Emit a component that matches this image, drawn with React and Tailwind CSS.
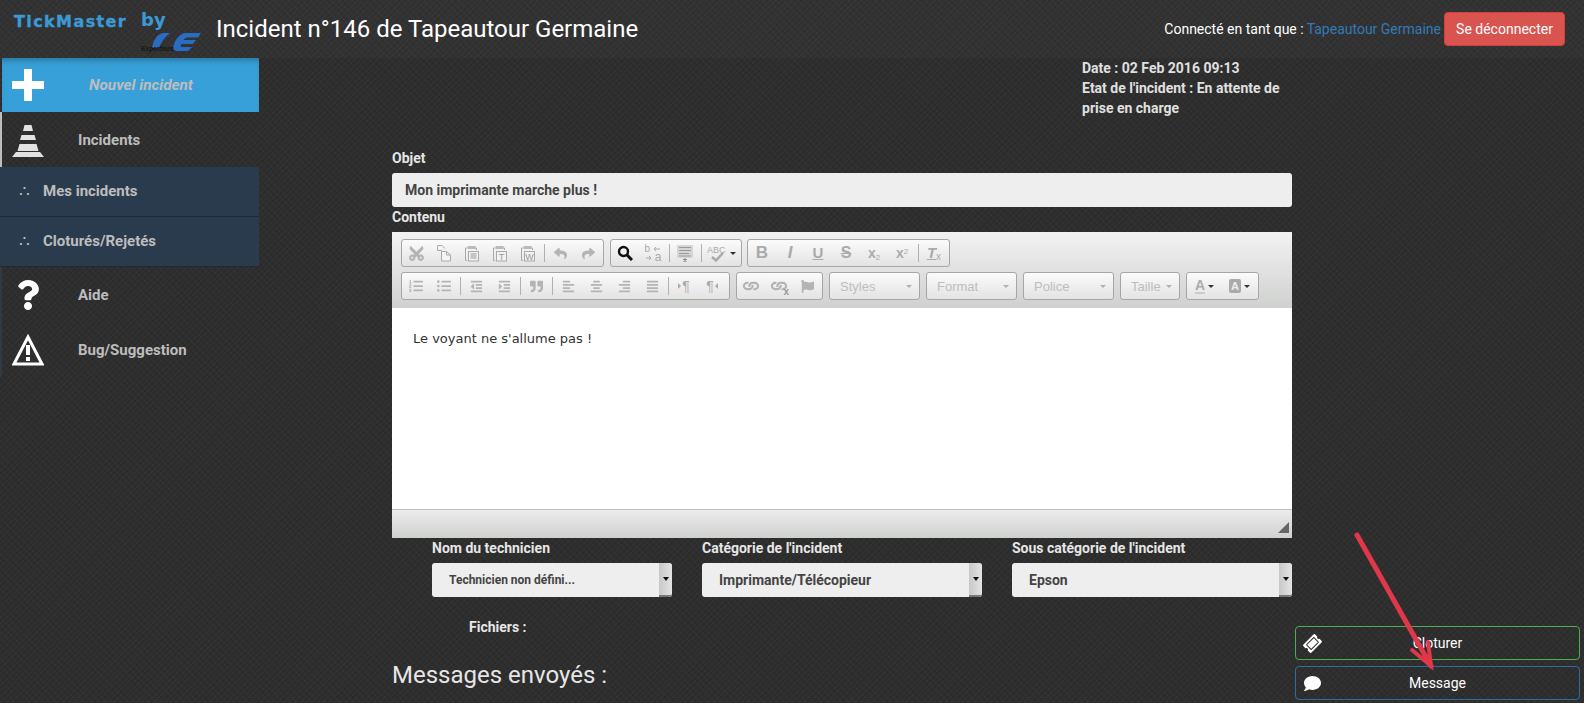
import React from 'react'
import {
  FaCut, FaReply, FaShare, FaListOl, FaListUl, FaOutdent, FaIndent, FaQuoteRight,
  FaAlignLeft, FaAlignCenter, FaAlignRight, FaAlignJustify, FaLink, FaFlag, FaQuestion,
  FaTicketAlt, FaComment,
} from 'react-icons/fa'

const Sep = () => <span className="mx-[1.5px] h-[18px] w-px bg-[#b0b0b0]" />

const Btn = ({ children, w = 'w-7' }) => (
  <span className={`flex h-full ${w} shrink-0 items-center justify-center text-[#b4b4b4]`}>{children}</span>
)

const Group = ({ children, className = 'pr-px' }) => (
  <div className={`flex h-7 items-center rounded-[3px] border border-[#a6a6a6] bg-gradient-to-b from-[#fbfbfb] to-[#e3e3e3] ${className}`}>
    {children}
  </div>
)

const Combo = ({ label, w }) => (
  <div className={`flex h-7 ${w} items-center justify-between rounded-[3px] border border-[#a6a6a6] bg-gradient-to-b from-[#fbfbfb] to-[#e3e3e3] pt-px pr-[7px] pl-[10px] font-['Liberation_Sans',sans-serif] text-[13px] text-[#bdbdbd]`}>
    {label}
    <span className="h-0 w-0 border-x-[3.5px] border-t-[3.5px] border-x-transparent border-t-[#b0b0b0]" />
  </div>
)

const Caret = ({ color = 'border-t-[#333]' }) => (
  <span className={`ml-[3px] h-0 w-0 border-x-[3px] border-t-[3px] border-x-transparent ${color}`} />
)

const PasteIcon = ({ letter }) => (
  <svg width="16" height="17" viewBox="0 0 16 17" fill="none" stroke="#aaa" strokeWidth="1">
    <path d="M3 3H1.5V15.5H3" />
    <rect x="3.5" y="1" width="8" height="3" fill="#bbb" stroke="none" />
    <path d="M11 3H12.5V5" />
    <rect x="4.5" y="6.5" width="10" height="9.5" fill="#f2f2f2" />
    {letter ? (
      <text x="9.5" y="14.5" fontSize="9" fontFamily="Liberation Sans, sans-serif" fill="#999" stroke="none" textAnchor="middle">{letter}</text>
    ) : (
      <path d="M6.5 9H12.5M6.5 11H12.5M6.5 13H12.5" stroke="#999" />
    )}
  </svg>
)

const CopyIcon = () => (
  <svg width="16" height="17" viewBox="0 0 16 17" fill="none" stroke="#aaa">
    <path d="M6 5.5H1.5V0.5H6L9 3.5" />
    <path d="M5.5 6.5H10.5L14.5 10V16H5.5Z" fill="#f4f4f4" />
    <path d="M10.5 6.5V10H14.5" />
  </svg>
)

const SearchIcon = () => (
  <svg width="16" height="16" viewBox="0 0 16 16" fill="none" stroke="#111">
    <circle cx="6.5" cy="6.5" r="4.5" strokeWidth="2.4" />
    <path d="M10 10L15 15" strokeWidth="3" />
  </svg>
)

const ReplaceIcon = () => (
  <span className="relative h-[17px] w-[17px] font-['Liberation_Sans',sans-serif] text-[#aaa]">
    <span className="absolute left-0 top-[-3px] text-[10px] leading-[14px]">b</span>
    <span className="absolute bottom-[-2px] right-0 text-[12px] leading-[14px]">a</span>
    <svg className="absolute inset-0" width="17" height="17" viewBox="0 0 17 17" fill="none" stroke="#aaa">
      <path d="M9 4H15M9 4L11 2M9 4L11 6" />
      <path d="M1 13H6M6 13L4 11M6 13L4 15" />
    </svg>
  </span>
)

const SelectAllIcon = () => (
  <svg width="16" height="17" viewBox="0 0 16 17">
    <rect x="0" y="0" width="16" height="13" fill="#d6d6d6" />
    <path d="M2 2.5H14M2 5.5H14M2 8.5H12M2 11H14" stroke="#999" />
    <path d="M6 14.5H10M8 13V17M6 17H10" stroke="#888" fill="none" />
  </svg>
)

const SpellIcon = () => (
  <span className="relative h-[17px] w-[20px] font-['Liberation_Sans',sans-serif] text-[9px] leading-[10px] text-[#aaa]">
    ABC
    <svg className="absolute bottom-0 left-[4px]" width="13" height="10" viewBox="0 0 13 10" fill="none" stroke="#a8a8a8" strokeWidth="2.4">
      <path d="M1 5L5 8.5L12 1" />
    </svg>
  </span>
)

const UnlinkIcon = () => (
  <span className="relative flex h-[16px] w-[16px] items-center justify-center">
    <FaLink size={14} className="rotate-45" />
    <span className="absolute right-[-2px] bottom-[-3px] font-['Liberation_Sans',sans-serif] text-[10px] leading-[10px] font-bold text-[#999]">x</span>
  </span>
)

const Para = ({ dir }) => (
  <span className="flex items-center font-['Liberation_Sans',sans-serif] text-[14px] text-[#aaa]">
    {dir === 'ltr' && <span className="mr-px h-0 w-0 border-y-[3px] border-l-[3px] border-y-transparent border-l-[#aaa]" />}
    ¶
    {dir === 'rtl' && <span className="ml-px h-0 w-0 border-y-[3px] border-r-[3px] border-y-transparent border-r-[#aaa]" />}
  </span>
)

const TextBtn = ({ children, className }) => (
  <span className={`font-['Liberation_Sans',sans-serif] text-[#aaa] ${className}`}>{children}</span>
)

function Toolbar() {
  return (
    <div className="flex h-[76px] flex-col gap-[5px] bg-gradient-to-b from-[#f2f2f2] to-[#cfd1cf] pl-[9px] pt-[7px]">
      <div className="flex gap-[6px]">
        <Group>
          <Btn><FaCut size={17} className="-rotate-90" /></Btn>
          <Btn><CopyIcon /></Btn>
          <Btn><PasteIcon /></Btn>
          <Btn><PasteIcon letter="T" /></Btn>
          <Btn><PasteIcon letter="W" /></Btn>
          <Sep />
          <Btn><FaReply size={13} /></Btn>
          <Btn><FaShare size={13} /></Btn>
        </Group>
        <Group>
          <Btn><SearchIcon /></Btn>
          <Btn><ReplaceIcon /></Btn>
          <Sep />
          <Btn><SelectAllIcon /></Btn>
          <Sep />
          <Btn w="w-[37px]"><SpellIcon /><Caret /></Btn>
        </Group>
        <Group className="-ml-px pr-px">
          <Btn><TextBtn className="text-[17px] font-bold">B</TextBtn></Btn>
          <Btn><TextBtn className="text-[17px] font-bold italic">I</TextBtn></Btn>
          <Btn><TextBtn className="text-[15px] font-bold underline">U</TextBtn></Btn>
          <Btn><TextBtn className="text-[16px] font-bold line-through">S</TextBtn></Btn>
          <Btn><TextBtn className="text-[14px] font-bold">x<sub className="text-[8px] font-normal">2</sub></TextBtn></Btn>
          <Btn><TextBtn className="text-[14px] font-bold">x<sup className="text-[8px] font-normal">2</sup></TextBtn></Btn>
          <Sep />
          <Btn><TextBtn className="text-[15px] font-bold italic underline">T<sub className="text-[10px] font-normal not-italic">x</sub></TextBtn></Btn>
        </Group>
      </div>
      <div className="flex gap-[6px]">
        <Group className="pr-[3px]">
          <Btn><FaListOl size={14} /></Btn>
          <Btn><FaListUl size={14} /></Btn>
          <Sep />
          <Btn><FaOutdent size={13} /></Btn>
          <Btn><FaIndent size={13} /></Btn>
          <Sep />
          <Btn><FaQuoteRight size={13} /></Btn>
          <Sep />
          <Btn><FaAlignLeft size={13} /></Btn>
          <Btn><FaAlignCenter size={13} /></Btn>
          <Btn><FaAlignRight size={13} /></Btn>
          <Btn><FaAlignJustify size={13} /></Btn>
          <Sep />
          <Btn><Para dir="ltr" /></Btn>
          <Btn><Para dir="rtl" /></Btn>
        </Group>
        <Group>
          <Btn><FaLink size={14} className="rotate-45" /></Btn>
          <Btn><UnlinkIcon /></Btn>
          <Btn><FaFlag size={13} /></Btn>
        </Group>
        <Combo label="Styles" w="w-[91px]" />
        <Combo label="Format" w="w-[91px]" />
        <Combo label="Police" w="w-[91px]" />
        <Combo label="Taille" w="w-[60px]" />
        <Group>
          <Btn w="w-[35px]">
            <TextBtn className="border-b-2 border-[#ccc] text-[14px] leading-[14px] font-bold">A</TextBtn>
            <Caret />
          </Btn>
          <Btn w="w-[35px]">
            <TextBtn className="rounded-[2px] bg-[#aaa] px-[2px] text-[11px] leading-[14px] font-bold !text-[#eee]">A</TextBtn>
            <Caret />
          </Btn>
        </Group>
      </div>
    </div>
  )
}

function Logo() {
  return (
    <svg width="214" height="58" viewBox="0 0 214 58" className="shrink-0">
      <text x="14" y="27" fill="#3b9ad6" stroke="#3b9ad6" strokeWidth="0.4" fontFamily="DejaVu Sans, sans-serif" fontWeight="700" fontSize="16" letterSpacing="1.4">TickMaster</text>
      <text x="141" y="26" fill="#3b9ad6" fontFamily="DejaVu Sans, sans-serif" fontWeight="700" fontSize="18">by</text>
      <g fill="#2a6cc0">
        <path d="M170 33H163C157 34 153 41 152 48H159C161 42 165 37 170 33Z" />
        <path d="M201 33H185C179 34 175 40 173 47C173 50 175 51 178 51H188L192 47H181C180.5 46 181 45 181.5 44H193L196 40H183.5C184.5 38.5 186 37.5 188 37.5H198Z" />
      </g>
      <text x="141" y="50.5" fill="#161616" fontFamily="Liberation Sans, sans-serif" fontStyle="italic" fontWeight="700" fontSize="6.5">Expertises</text>
    </svg>
  )
}

const PlusIcon = () => (
  <svg width="32" height="32" viewBox="0 0 32 32" fill="#fff"><path d="M12 0H20V12H32V20H20V32H12V20H0V12H12Z" /></svg>
)

const ConeIcon = () => (
  <svg width="32" height="32" viewBox="0 0 32 32" fill="#e2e2e2" className="mt-[3px]">
    <path d="M12.5 0H19.5L21 6H11Z" />
    <path d="M9.5 10H22.5L24 15H8Z" />
    <path d="M7.5 19H24.5L26.5 26H5.5Z" />
    <path d="M4 27H28L32 32H0Z" />
  </svg>
)

const WarningIcon = () => (
  <svg width="32" height="32" viewBox="0 0 32 32" fill="none">
    <path d="M16 3L30 30H2Z" stroke="#fff" strokeWidth="3" />
    <path d="M14 11H18V21H14ZM14 23H18V27H14Z" fill="#fff" />
  </svg>
)

const MenuRow = ({ icon, label, border }) => (
  <div className={`flex h-[55px] items-center border-l-2 ${border}`}>
    <span className="flex w-[76px] justify-center pr-[24px]">{icon}</span>
    <span className="mt-[2px] font-bold">{label}</span>
  </div>
)

const SubRow = ({ label }) => (
  <div className="flex h-[50px] items-center border-b border-[#1e2a36] bg-[#2a3b4d] pl-[19px]">
    <span className="w-[24px] text-[17px] leading-none">∴</span>
    <span className="font-bold">{label}</span>
  </div>
)

function Sidebar() {
  return (
    <aside className="w-[259px] shrink-0 text-[15px] text-[#bdbdbd]">
      <div className="ml-[2px] flex h-[54px] items-center bg-[#38a0d8] pl-[10px] shadow-[inset_0_6px_6px_-4px_rgba(0,0,0,0.3)]">
        <PlusIcon />
        <span className="ml-[45px] text-[15.3px] font-bold italic">Nouvel incident</span>
      </div>
      <MenuRow icon={<ConeIcon />} label="Incidents" border="border-[#bdbdbd]" />
      <SubRow label="Mes incidents" />
      <SubRow label="Cloturés/Rejetés" />
      <MenuRow icon={<FaQuestion size={30} color="#fff" />} label="Aide" border="border-[#2f3a44]" />
      <MenuRow icon={<WarningIcon />} label="Bug/Suggestion" border="border-[#2f3a44]" />
    </aside>
  )
}

const Field = ({ label, value, width, small }) => (
  <div className={width}>
    <div className="h-[25px] text-[14px] leading-[20px] font-bold text-[#e6e6e6]">{label}</div>
    <div className="flex h-[34px] items-stretch overflow-hidden rounded-[3px] bg-[#eeeeee]">
      <span className={`flex-1 self-center pl-[17px] font-bold text-[#444] ${small ? 'text-[12px]' : 'text-[14px]'}`}>{value}</span>
      <span className="flex w-[13px] items-center justify-center rounded-r-[3px] border-b-2 border-[#777] bg-gradient-to-r from-[#c8c8c8] to-[#e4e4e4]">
        <span className="h-0 w-0 border-x-[3px] border-t-[4px] border-x-transparent border-t-[#111]" />
      </span>
    </div>
  </div>
)

export default function App() {
  return (
    <div className="relative h-[703px] overflow-hidden bg-[#2d2d2d] bg-[repeating-linear-gradient(45deg,rgba(255,255,255,0.015)_0px,rgba(255,255,255,0.015)_2px,transparent_2px,transparent_5px),repeating-linear-gradient(135deg,#2f2f2f_0px,#2f2f2f_2px,#2b2b2b_2px,#2b2b2b_4px)] font-['Roboto',sans-serif]">
      <header className="flex h-[58px] items-center bg-white/[0.02]">
        <Logo />
        <h1 className="ml-[2px] text-[24px] text-white">Incident n°146 de Tapeautour Germaine</h1>
        <div className="mr-[19px] ml-auto flex items-center text-[14px] text-white">
          <span>Connecté en tant que :</span>
          <a className="ml-[3px] text-[#337ab7]">Tapeautour Germaine</a>
          <button className="ml-[3px] h-[34px] w-[121px] rounded-[4px] border border-[#d43f3a] bg-[#d9534f]">Se déconnecter</button>
        </div>
      </header>

      <div className="flex h-[645px]">
        <Sidebar />

        <main className="ml-[133px] w-[900px] shrink-0">
          <div className="ml-[690px] h-[89px] w-[215px] text-[14px] leading-[20px] font-bold text-[#e0e0e0]">
            <p>Date : 02 Feb 2016 09:13</p>
            <p>Etat de l'incident : En attente de prise en charge</p>
          </div>
          <div className="mt-[1px] h-[25px] text-[14px] leading-[20px] font-bold text-[#e6e6e6]">Objet</div>
          <div className="flex h-[34px] items-center rounded-[3px] bg-[#eeeeee] pl-[13px] text-[14px] font-bold text-[#444]">
            Mon imprimante marche plus !
          </div>
          <div className="h-[25px] text-[14px] leading-[20px] font-bold text-[#e6e6e6]">Contenu</div>

          <div className="flex h-[306px] flex-col">
            <Toolbar />
            <div className="h-[201px] bg-white pt-[22px] pl-[21px] font-['DejaVu_Sans',sans-serif] text-[13px] leading-[18px] text-[#333]">
              Le voyant ne s'allume pas !
            </div>
            <div className="relative flex-1 border-t border-[#bfbfbf] bg-gradient-to-b from-[#ececec] to-[#cfd1cf]">
              <span className="absolute right-[3px] bottom-[5px] h-0 w-0 border-b-[11px] border-l-[11px] border-b-[#666] border-l-transparent" />
            </div>
          </div>

          <div className="ml-[40px] flex gap-[30px]">
            <Field label="Nom du technicien" value="Technicien non défini..." width="w-[240px]" small />
            <Field label="Catégorie de l'incident" value="Imprimante/Télécopieur" width="w-[280px]" />
            <Field label="Sous catégorie de l'incident" value="Epson" width="w-[280px]" />
          </div>

          <div className="mt-[20px] ml-[77px] text-[14px] leading-[20px] font-bold text-[#e6e6e6]">Fichiers :</div>
          <h2 className="mt-[24px] text-[24px] leading-[28px] text-[#e6e6e6]">Messages envoyés :</h2>
        </main>

        <div className="ml-[3px] flex w-[285px] shrink-0 flex-col justify-end gap-[6px] pb-[3px] text-[14px] text-white">
          <button className="relative flex h-[34px] items-center justify-center rounded-[4px] border border-[#4cae4c]">
            <FaTicketAlt size={17} className="absolute left-[8px] -rotate-45" />
            Cloturer
          </button>
          <button className="relative flex h-[34px] items-center justify-center rounded-[4px] border border-[#2e6da4]">
            <FaComment size={17} className="absolute left-[8px]" />
            Message
          </button>
        </div>
      </div>

      {/* annotation drawn over the page */}
      <svg className="pointer-events-none absolute top-0 left-0" width="1584" height="703" fill="none" stroke="#e0374a" strokeWidth="5" strokeLinecap="round">
        <path d="M1357 535L1431 666" />
        <path d="M1412 650L1431 666L1428 642" strokeWidth="4" />
      </svg>
    </div>
  )
}
